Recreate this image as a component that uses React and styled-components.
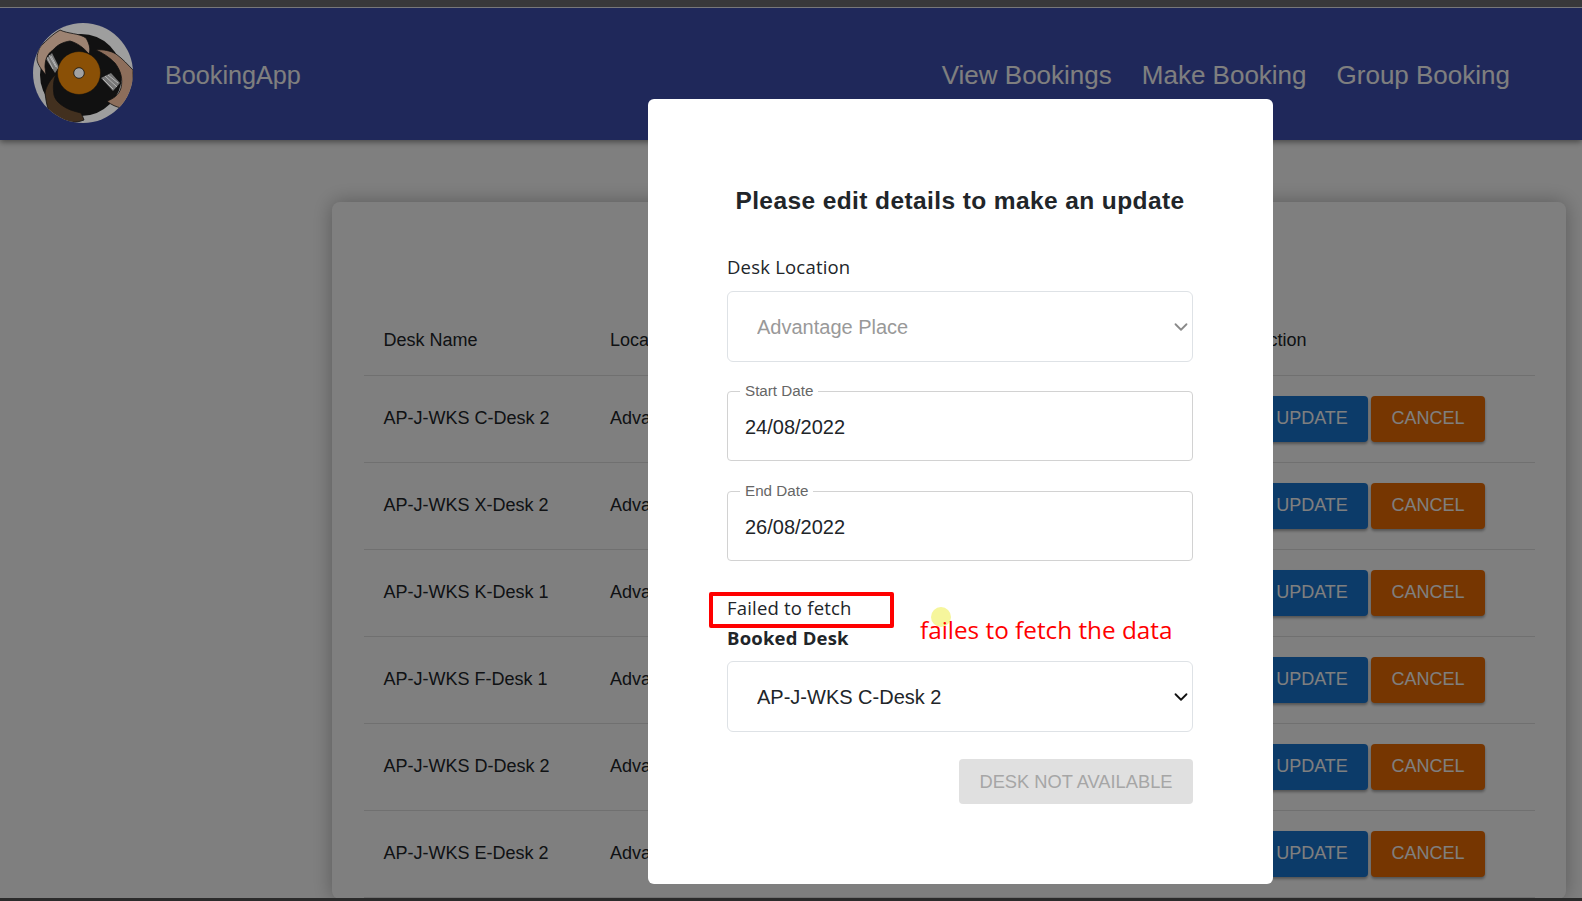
import React from "react";
import styled, { createGlobalStyle } from "styled-components";
import { ChevronDown } from "lucide-react";

const GlobalStyle = createGlobalStyle`
  html, body {
    margin: 0;
    padding: 0;
    height: 901px;
    overflow: hidden;
    background: #fff;
    font-family: "Liberation Sans", Arial, sans-serif;
    color: #212529;
  }
  * {
    box-sizing: border-box;
  }
`;

const Strip = styled.div`
  position: relative;
  z-index: 5;
  height: 8px;
  background: #38383a;
  border-bottom: 1px solid #77777a;
`;

const BottomEdge = styled.div`
  position: fixed;
  z-index: 5;
  left: 0;
  right: 0;
  bottom: 0;
  height: 3px;
  background: #2b2b2b;
`;

const Navbar = styled.header`
  height: 132px;
  background: #3f51b5;
  display: flex;
  align-items: center;
  padding: 0 72px 0 33px;
  box-shadow: 0 2px 6px rgba(0, 0, 0, 0.45);
`;

const Logo = styled.svg`
  position: relative;
  z-index: 5;
  width: 100px;
  height: 100px;
  flex: none;
  margin-top: -2px;
`;

const Brand = styled.div`
  font-size: 25.2px;
  color: #fff;
  margin-left: 32px;
  padding-top: 2px;
  flex: 1;
`;

const NavLinks = styled.nav`
  display: flex;
  gap: 30px;
  padding: 2px 0 0 1px;
`;

const NavLink = styled.a`
  font-size: 26px;
  color: #fff;
`;

const Card = styled.section`
  margin: 62px 16px 0 332px;
  padding: 102px 31px 1px 32px;
  background: #fff;
  border-radius: 8px;
  box-shadow: 0 0 20px rgba(0, 0, 0, 0.3);
`;

const TableRow = styled.div`
  display: grid;
  grid-template-columns: 226.5px 1fr 298px;
  align-items: center;
  height: ${(p) => (p.$head ? "72px" : "87px")};
  border-bottom: 1px solid #e0e0e0;
  font-size: 18px;
`;

const Cell = styled.div`
  padding: 0 0 2px 19.5px;
  white-space: nowrap;
`;

const HeadCell = styled(Cell)`
  padding-top: 2px;
  padding-bottom: 0;
`;

const Actions = styled(Cell)`
  display: flex;
  gap: 3px;
  padding: 0 0 0 19px;
`;

const ActionButton = styled.button`
  height: 46px;
  width: ${(p) => (p.$kind === "update" ? "112px" : "114px")};
  padding: 0 0 2px;
  border: none;
  border-radius: 4px;
  font: 18px "Liberation Sans", Arial, sans-serif;
  color: #fff;
  background: ${(p) => (p.$kind === "update" ? "#1976d2" : "#ed6c02")};
  box-shadow: 0 2px 3px rgba(0, 0, 0, 0.35);
`;

const Backdrop = styled.div`
  position: fixed;
  inset: 0;
  z-index: 2;
  background: rgba(0, 0, 0, 0.5);
`;

const Modal = styled.div`
  position: fixed;
  z-index: 3;
  left: 648px;
  top: 99px;
  width: 625px;
  height: 785px;
  padding: 85px 80px 0 79px;
  background: #fff;
  border-radius: 6px;
`;

const Title = styled.h2`
  margin: 0 0 37px;
  font-size: 24.5px;
  line-height: 34px;
  font-weight: 700;
  text-align: center;
  white-space: nowrap;
  letter-spacing: 0.4px;
`;

const Label = styled.div`
  font-family: "Open Sans", sans-serif;
  font-size: 18.5px;
  letter-spacing: 0.2px;
  line-height: 24px;
  margin-top: ${(p) => p.$top || 0}px;
  margin-bottom: ${(p) => p.$gap || 0}px;
  font-weight: ${(p) => (p.$bold ? 700 : 400)};
`;

const SelectWrap = styled.div`
  position: relative;
  margin-bottom: ${(p) => p.$gap || 0}px;
  svg {
    position: absolute;
    right: 1px;
    top: 50%;
    margin-top: -11px;
    pointer-events: none;
    color: ${(p) => (p.$muted ? "#8a8a8a" : "#111")};
  }
`;

const Select = styled.select`
  display: block;
  width: 100%;
  height: ${(p) => p.$h}px;
  padding: 0 29px;
  appearance: none;
  font: 20px "Liberation Sans", Arial, sans-serif;
  color: #212529;
  background: #fff;
  border: 1.5px solid #dee2e6;
  border-radius: 6px;
  &:disabled {
    color: #999;
    opacity: 1;
  }
`;

const Field = styled.fieldset`
  margin: -8px 0 ${(p) => p.$gap}px;
  padding: 0 17px;
  height: 78px;
  border: 1.5px solid #d2d2d2;
  border-radius: 4px;
  display: flex;
  align-items: center;
  legend {
    font-family: "Liberation Sans", Arial, sans-serif;
    font-size: 15.2px;
    line-height: 16px;
    color: #666;
    padding: 0 5px;
    margin-left: -5px;
  }
`;

const FieldValue = styled.div`
  font-family: "Liberation Sans", Arial, sans-serif;
  font-size: 20px;
  margin-top: -5px;
`;

const Footer = styled.div`
  display: flex;
  justify-content: flex-end;
  margin-top: 27px;
`;

const DisabledButton = styled.button`
  width: 234px;
  height: 45px;
  border: none;
  border-radius: 4px;
  background: #e0e0e0;
  color: #a6a6a6;
  font: 18.3px "Liberation Sans", Arial, sans-serif;
`;

const RedBox = styled.div`
  position: fixed;
  z-index: 4;
  left: 709px;
  top: 592px;
  width: 185px;
  height: 36px;
  border: 4px solid #ff0000;
  border-radius: 2px;
`;

const CursorDot = styled.div`
  position: fixed;
  z-index: 4;
  left: 931px;
  top: 607px;
  width: 20px;
  height: 20px;
  border-radius: 50%;
  background: #f6f69c;
`;

const Annotation = styled.div`
  position: fixed;
  z-index: 4;
  left: 920px;
  top: 612px;
  font-family: "Open Sans", sans-serif;
  font-size: 24.3px;
  line-height: 36px;
  color: #ff0000;
  white-space: nowrap;
`;

const desks = [
  "AP-J-WKS C-Desk 2",
  "AP-J-WKS X-Desk 2",
  "AP-J-WKS K-Desk 1",
  "AP-J-WKS F-Desk 1",
  "AP-J-WKS D-Desk 2",
  "AP-J-WKS E-Desk 2",
];

// Vinyl record held by three hands, colours already dimmed like the backdrop
function VinylLogo() {
  return (
    <Logo viewBox="0 0 100 100">
      <defs>
        <clipPath id="disc">
          <circle cx="50" cy="50" r="50" />
        </clipPath>
      </defs>
      <g clipPath="url(#disc)">
        <rect width="100" height="100" fill="#9e9e9e" />
        <circle cx="48" cy="52" r="41" fill="#111" />
        <path d="M13 36 L19 30 L26 44 L22 50z" fill="#777" />
        <path d="M68 55 L78 50 L87 60 L80 68z" fill="#777" />
        <g stroke="#c4c4c4" strokeWidth="0.8">
          <path d="M14 34 L20 46" />
          <path d="M16 32 L23 44" />
          <path d="M18 33 L25 46" />
          <path d="M70 56 L80 66" />
          <path d="M72 53 L84 64" />
          <path d="M75 52 L85 60" />
        </g>
        <path
          d="M27 7 C35 11 46 10 53 15 C56 20 58 26 56 31 C50 24 44 20 37 18 C30 19 24 22 20 27 C14 31 12 37 12 44 L13 52 C8 46 5 42 4 37 C4 30 6 26 8 23 C14 17 20 11 27 7z"
          fill="#9d8372"
          stroke="#111"
          strokeWidth="0.8"
        />
        <path
          d="M63 27 C70 26 78 28 83 31 C90 36 95 42 100 47 L100 64 C98 72 94 80 88 85 C84 84 78 82 74 78 C80 76 86 72 88 65 C90 56 88 48 82 40 C76 34 70 30 63 27z"
          fill="#8d6e5b"
          stroke="#111"
          strokeWidth="0.8"
        />
        <path
          d="M23 51 C18 56 13 63 12 70 C13 78 14 85 17 90 C22 96 28 98 34 99 C40 100 46 99 51 97 C50 94 49 92 48 90 C40 88 34 86 30 83 C25 80 22 76 21 72 C20 65 20 58 23 51z"
          fill="#42301f"
          stroke="#111"
          strokeWidth="0.8"
        />
        <circle cx="46" cy="50" r="21.5" fill="#8a5006" stroke="#111" strokeWidth="0.5" />
        <circle cx="46" cy="50" r="5.3" fill="#a2a2a2" stroke="#111" strokeWidth="0.8" />
      </g>
    </Logo>
  );
}

export default function App() {
  return (
    <>
      <GlobalStyle />
      <Strip />
      <Navbar>
        <VinylLogo />
        <Brand>BookingApp</Brand>
        <NavLinks>
          <NavLink>View Bookings</NavLink>
          <NavLink>Make Booking</NavLink>
          <NavLink>Group Booking</NavLink>
        </NavLinks>
      </Navbar>
      <Card>
        <TableRow $head>
          <HeadCell>Desk Name</HeadCell>
          <HeadCell>Location</HeadCell>
          <HeadCell>Action</HeadCell>
        </TableRow>
        {desks.map((desk) => (
          <TableRow key={desk}>
            <Cell>{desk}</Cell>
            <Cell>Advantage Place</Cell>
            <Actions>
              <ActionButton $kind="update">UPDATE</ActionButton>
              <ActionButton $kind="cancel">CANCEL</ActionButton>
            </Actions>
          </TableRow>
        ))}
      </Card>
      <Backdrop />
      <Modal>
        <Title>Please edit details to make an update</Title>
        <Label $gap={12}>Desk Location</Label>
        <SelectWrap $gap={29} $muted>
          <Select $h={71} disabled defaultValue="Advantage Place">
            <option>Advantage Place</option>
          </Select>
          <ChevronDown size={22} strokeWidth={2} />
        </SelectWrap>
        <Field $gap={30}>
          <legend>Start Date</legend>
          <FieldValue>24/08/2022</FieldValue>
        </Field>
        <Field $gap={35}>
          <legend>End Date</legend>
          <FieldValue>26/08/2022</FieldValue>
        </Field>
        <Label>Failed to fetch</Label>
        <Label $bold $top={6} $gap={11}>Booked Desk</Label>
        <SelectWrap>
          <Select $h={71} defaultValue="AP-J-WKS C-Desk 2">
            <option>AP-J-WKS C-Desk 2</option>
          </Select>
          <ChevronDown size={22} strokeWidth={2} />
        </SelectWrap>
        <Footer>
          <DisabledButton disabled>DESK NOT AVAILABLE</DisabledButton>
        </Footer>
      </Modal>
      <RedBox />
      <CursorDot />
      <Annotation>failes to fetch the data</Annotation>
      <BottomEdge />
    </>
  );
}
